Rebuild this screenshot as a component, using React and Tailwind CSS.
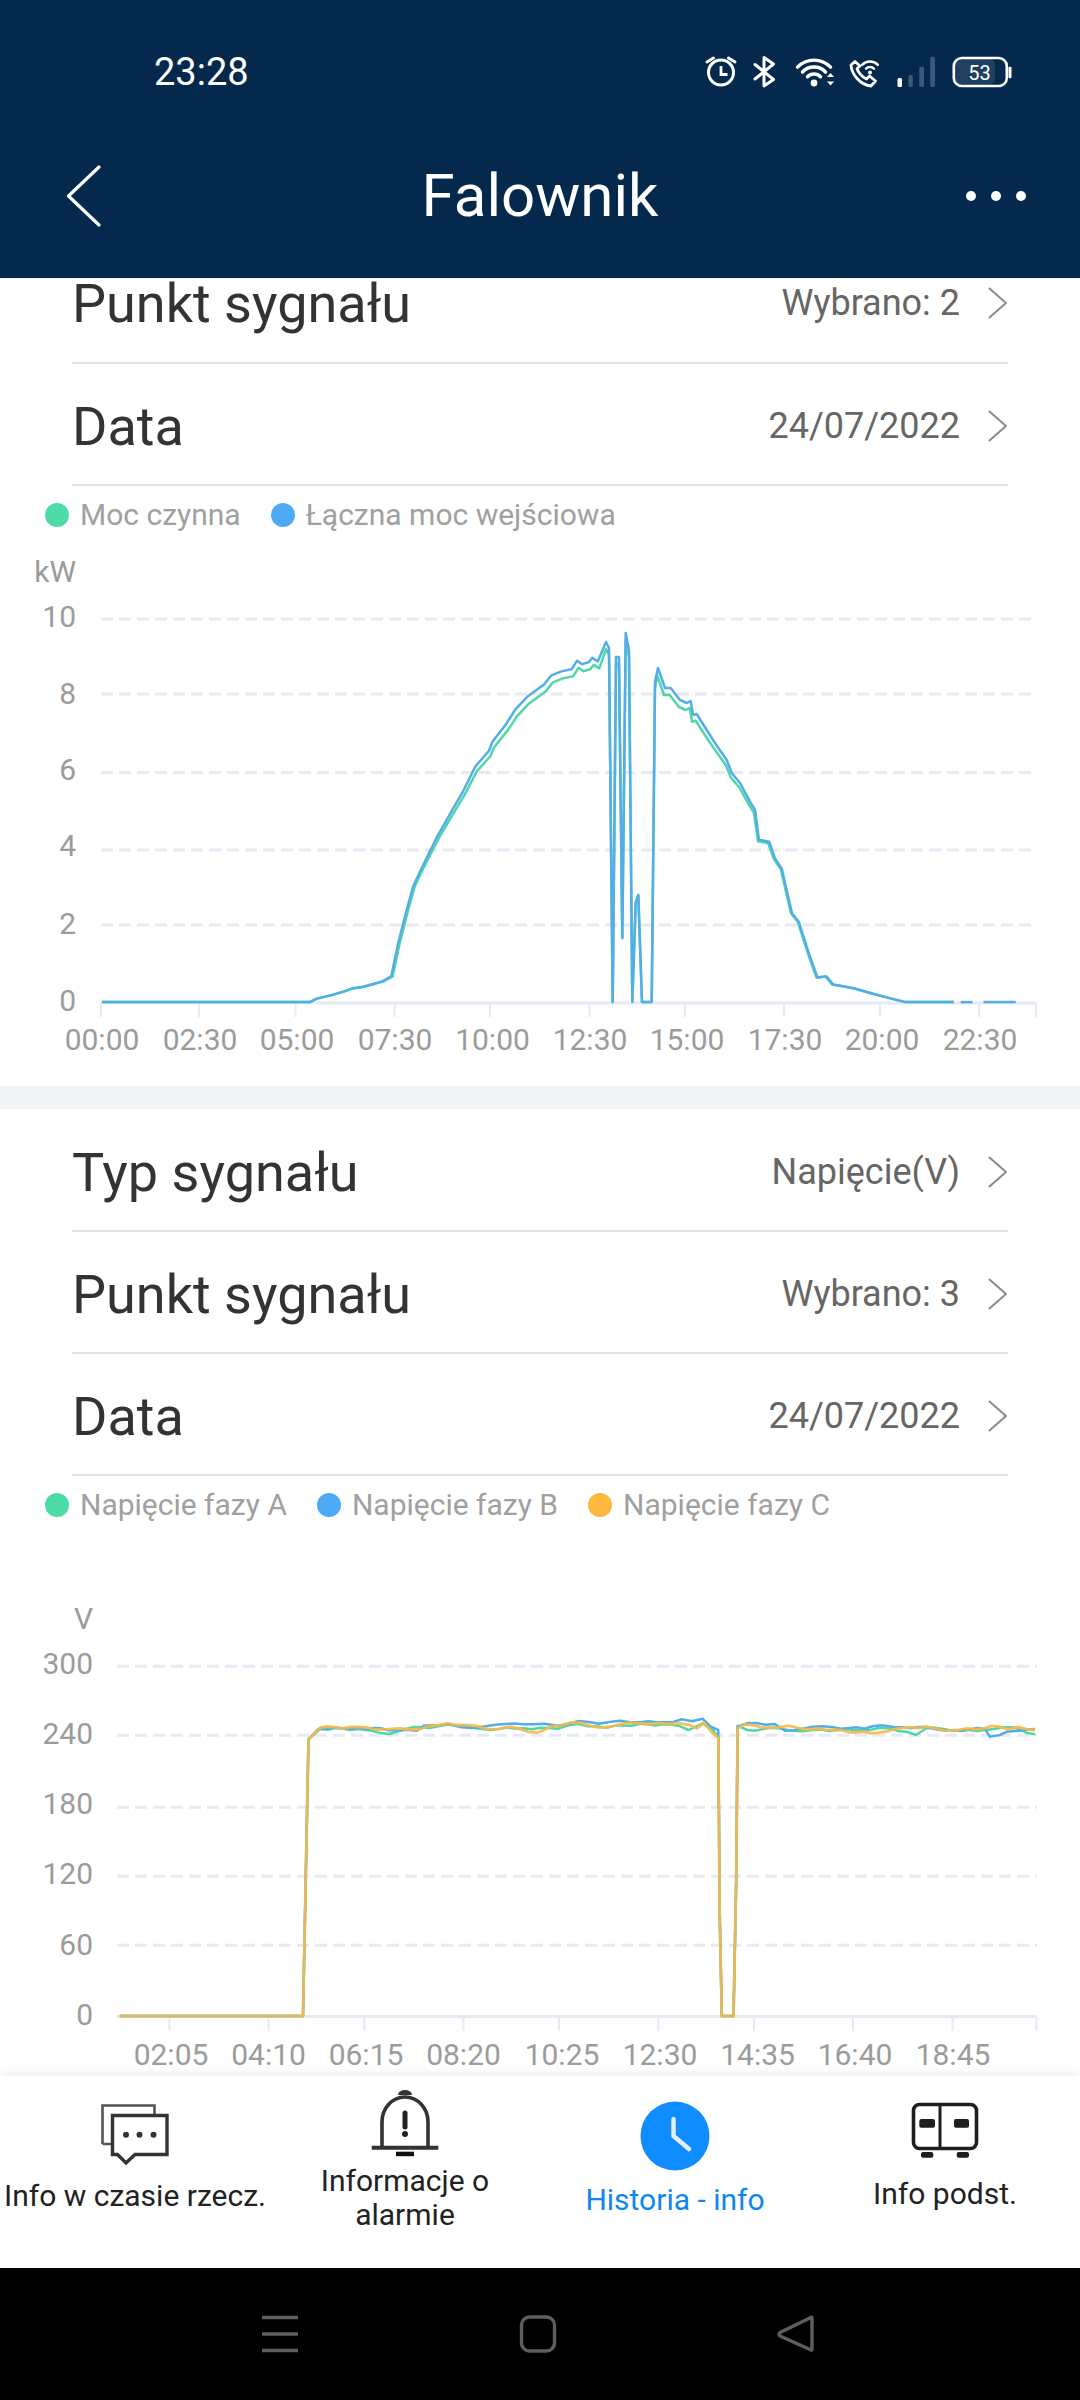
import React from "react";

const poly = (pts) => pts.map((p, i) => `${i ? "L" : "M"}${p[0].toFixed(1)} ${p[1].toFixed(1)}`).join(" ");
const z3 = (a) => a.map(([x, y]) => [x / 1.452, 540 + y / 2.8]);
const z5 = (a) => a.map(([x, y]) => [x / 1.452, 1580 + y / 3]);

const rise = z3([[148,1294],[450,1294],[460,1284],[480,1275],[500,1264],[510,1256],[525,1252],[540,1244],[555,1236],[568,1222],[578,1130],[590,1040],[600,970],[612,920],[635,830],[660,745],[672,705],[690,635],[710,590],[715,565],[735,515],[748,475],[765,440],[790,405],[800,380],[815,368],[830,362],[838,338],[845,348],[855,342],[860,330],[868,340]]);
const spikes = [[606,642],[609,648],[612.7,1002],[616,657],[619,657],[622.3,938],[625.7,633],[629,650],[632.3,1002],[635.7,903],[638.3,895],[642,1002],[651.7,1002],[655,681.7],[658,668],[665,688],[670.7,688],[680,700],[686.7,703],[690.7,701],[693,715],[696.7,714],[706.7,730],[715,743],[726.7,760],[731.7,773],[740,783],[750,801.7],[755,810],[759,840]];
const fall = z3([[1105,840],[1117,845],[1125,890],[1135,920],[1150,1045],[1160,1070],[1175,1160],[1187,1225],[1200,1222],[1210,1245],[1240,1255],[1270,1272],[1290,1282],[1315,1294],[1385,1294]]);
const blue1 = [...rise, ...spikes, ...fall];
const green1 = blue1.map(([x, y]) => {
  const k = y > 990 ? 0 : 7 * Math.min(1, Math.max(0, (880 - y) / 170));
  const dx = y > 990 || y < 620 ? 0 : x > 655 ? -1 : x < 600 ? 1.5 : 0;
  return [x + dx, y + k];
});
const tail1 = [z3([[1395,1294],[1412,1294]]), z3([[1428,1294],[1475,1294]])];

const jitter = (pts, seed) => {
  const out = [];
  pts.forEach((p, i) => {
    out.push(p);
    const q = pts[i + 1];
    if (!q) return;
    const n = Math.floor((q[0] - p[0]) / 7);
    for (let j = 1; j < n; j++) {
      const t = j / n;
      const a = Math.sin((p[0] + j) * 1.7 + seed) * 1.1;
      out.push([p[0] + (q[0] - p[0]) * t, p[1] + (q[1] - p[1]) * t + a]);
    }
  });
  return out;
};

const build = (first, second, seed) => [
  ...z5([[174,1308],[440,1308]]),
  ...jitter(z5(first), seed),
  ...z5([[1045,1000],[1048,1308],[1065,1308],[1069,900]]),
  ...jitter(z5(second), seed + 2),
];

const blue2 = build(
  [[448,478],[462,447],[520,443],[575,450],[605,452],[615,437],[650,432],[670,442],[700,440],[720,434],[760,433],[790,431],[810,437],[840,423],[870,431],[900,422],[930,427],[965,427],[990,418],[1005,424],[1020,416],[1032,440],[1043,450]],
  [[1071,440],[1085,430],[1125,432],[1140,452],[1180,440],[1210,442],[1255,446],[1280,436],[1300,442],[1345,441],[1375,452],[1430,446],[1437,470],[1452,465],[1462,455],[1480,452],[1503,447]],
  1
);
const green2 = build(
  [[448,478],[465,447],[520,447],[540,452],[565,462],[590,446],[660,435],[700,447],[760,445],[810,446],[840,432],[880,443],[930,431],[985,437],[1000,450],[1020,430],[1035,450],[1043,470]],
  [[1071,437],[1085,450],[1130,445],[1150,452],[1180,450],[1240,450],[1290,445],[1330,465],[1345,445],[1395,450],[1430,450],[1470,442],[1503,463]],
  3
);
const orange2 = build(
  [[448,478],[465,443],[520,441],[560,448],[580,445],[610,447],[650,430],[690,437],[710,448],[740,440],[780,458],[800,440],[830,427],[870,443],[900,433],[930,430],[970,432],[1000,434],[1012,445],[1022,428],[1033,455],[1043,473]],
  [[1071,445],[1082,433],[1120,443],[1145,437],[1165,447],[1210,450],[1265,460],[1300,447],[1345,440],[1380,452],[1430,445],[1440,438],[1462,448],[1480,441],[1503,450]],
  5
);

const GRID = "#e6eaf5";
const LABEL = "#9b9b9b";

function Chart({ top, height, left, right, grids, axisY, ticks, tickEnd, yLabels, yRight, unit, xLabels, xY, children }) {
  return (
    <svg viewBox={`0 ${top} 1080 ${height}`} className="block w-[1080px] shrink-0" style={{ height }}>
      {grids.map((y) => (
        <line key={y} x1={left} x2={right} y1={y} y2={y} stroke={GRID} strokeWidth="3" strokeDasharray="12 6" />
      ))}
      <line x1={left} x2={1036} y1={axisY} y2={axisY} stroke={GRID} strokeWidth="3" />
      {ticks.map((x) => (
        <line key={x} x1={x} x2={x} y1={axisY} y2={tickEnd} stroke={GRID} strokeWidth="2" />
      ))}
      {yLabels.map(([t, y]) => (
        <text key={t} x={yRight} y={y} textAnchor="end" dominantBaseline="central" fontSize="30" fill={LABEL}>{t}</text>
      ))}
      <text x={yRight} y={unit[1]} textAnchor="end" dominantBaseline="central" fontSize="30" fill={LABEL}>{unit[0]}</text>
      {xLabels.map(([t, x]) => (
        <text key={t} x={x} y={xY} textAnchor="middle" dominantBaseline="central" fontSize="30" fill={LABEL}>{t}</text>
      ))}
      {children}
    </svg>
  );
}

const Chevron = () => (
  <svg width="20" height="32" viewBox="0 0 20 32" fill="none" className="ml-[28px] shrink-0">
    <path d="M1.5 1.5 L18 16 L1.5 30.5" stroke="#8a8a8a" strokeWidth="2" strokeLinecap="round" strokeLinejoin="round" />
  </svg>
);

function Row({ label, value, className }) {
  return (
    <div className={`mx-[72px] flex items-center justify-between border-b-2 border-[#e2e2e2] ${className}`}>
      <span className="text-[54px] leading-none text-[#333333]">{label}</span>
      <span className="mb-[2px] flex items-center text-[36px] leading-none text-[#666666]">
        {value}
        <Chevron />
      </span>
    </div>
  );
}

function Legend({ items, className }) {
  return (
    <div className={`flex items-center pl-[45px] gap-[30px] ${className}`}>
      {items.map(([t, c]) => (
        <div key={t} className="flex items-center gap-[11px]">
          <span className={`h-[24px] w-[24px] rounded-full ${c}`} />
          <span className="text-[30px] leading-none text-[#a0a0a0]">{t}</span>
        </div>
      ))}
    </div>
  );
}

function NavItem({ icon, lines, pt, gap, color }) {
  return (
    <div className="flex flex-1 flex-col items-center" style={{ paddingTop: pt }}>
      {icon}
      <div className={`whitespace-nowrap text-center text-[30px] leading-[34px] ${color}`} style={{ marginTop: gap }}>
        {lines.map((l) => <div key={l}>{l}</div>)}
      </div>
    </div>
  );
}

const wifiArc = (cx, cy, r) => `M${cx - r * 0.72} ${cy - r * 0.69} A${r} ${r} 0 0 1 ${cx + r * 0.72} ${cy - r * 0.69}`;

function StatusIcons() {
  return (
    <svg viewBox="700 50 320 45" width="320" height="45" fill="none" className="block">
      <circle cx="721" cy="72.5" r="12.5" stroke="#fff" strokeWidth="3" />
      <path d="M721 66 V74.5 H727.5" stroke="#fff" strokeWidth="2.8" />
      <path d="M707 62 L713.5 58 M735 62 L728.5 58" stroke="#fff" strokeWidth="3" strokeLinecap="round" />
      <path d="M755 64.5 L773.5 79.5 L764 86 V57.5 L773.5 64 L755 79" stroke="#fff" strokeWidth="3" strokeLinejoin="round" strokeLinecap="round" />
      <circle cx="814" cy="83" r="3.4" fill="#fff" />
      {[9, 16, 23].map((r) => (
        <path key={r} d={wifiArc(814, 83, r)} stroke="#fff" strokeWidth="3.4" strokeLinecap="round" />
      ))}
      <path d="M827 77 L830.5 73 L834 77 Z M827 81.5 L830.5 85.5 L834 81.5 Z" fill="#fff" />
      <path d="M855 61.5 L851 65 C851.5 74 860 85 871 86 L875.5 81 L869.5 76 L866.5 79 C862 77 858 72 857 68.5 L860 66 Z" stroke="#fff" strokeWidth="2.8" strokeLinejoin="round" />
      <circle cx="870" cy="72.5" r="2" fill="#fff" />
      {[5.5, 11].map((r) => (
        <path key={r} d={wifiArc(870, 72.5, r)} stroke="#fff" strokeWidth="2.4" strokeLinecap="round" />
      ))}
      <rect x="897.5" y="78" width="4.5" height="9" rx="1.5" fill="#fff" />
      <rect x="908.3" y="75" width="4.5" height="12" rx="1.5" fill="#3b5a79" />
      <rect x="919.3" y="66.7" width="4.7" height="20.3" rx="1.5" fill="#3b5a79" />
      <rect x="930.2" y="56.7" width="4.8" height="30.3" rx="1.5" fill="#3b5a79" />
      <rect x="955" y="59" width="40" height="25.5" rx="6" fill="#20405f" />
      <rect x="953.8" y="58" width="53" height="28" rx="8" stroke="#fff" strokeWidth="2.6" />
      <rect x="1008.5" y="66.7" width="3" height="11.6" rx="1" fill="#fff" />
      <text x="979.5" y="72.5" textAnchor="middle" dominantBaseline="central" fontSize="20" fill="#fff">53</text>
    </svg>
  );
}

export default function App() {
  return (
    <div className="flex h-[2400px] w-[1080px] flex-col overflow-hidden bg-white font-[Roboto,sans-serif]">
      <header className="flex h-[278px] shrink-0 flex-col bg-[#04294c] text-white">
        <div className="flex h-[144px] items-center justify-between">
          <span className="pl-[154px] text-[38px] leading-none">23:28</span>
          <span className="mr-[60px]"><StatusIcons /></span>
        </div>
        <div className="grid h-[104px] grid-cols-[1fr_auto_1fr] items-center">
          <svg width="36" height="62" viewBox="0 0 36 62" fill="none" className="ml-[66px]">
            <path d="M33 2 L2.5 31 L33 60" stroke="#fff" strokeWidth="3.2" strokeLinecap="round" strokeLinejoin="round" />
          </svg>
          <span className="text-[60px] leading-none">Falownik</span>
          <div className="flex justify-end gap-[15px] pr-[54px]">
            <span className="h-[10px] w-[10px] rounded-full bg-white" />
            <span className="h-[10px] w-[10px] rounded-full bg-white" />
            <span className="h-[10px] w-[10px] rounded-full bg-white" />
          </div>
        </div>
      </header>

      <main className="flex min-h-0 flex-1 flex-col overflow-hidden">
        <Row label="Punkt sygnału" value="Wybrano: 2" className="-mt-[36px] h-[122px] shrink-0 pt-[3px]" />
        <Row label="Data" value="24/07/2022" className="h-[122px] shrink-0 pt-[5px]" />
        <Legend className="h-[59px] shrink-0 pb-[2px]" items={[["Moc czynna", "bg-[#4ddba8]"], ["Łączna moc wejściowa", "bg-[#4dabf5]"]]} />
        <Chart
          top={545}
          height={541}
          left={101}
          right={1032}
          grids={[619, 694, 772.5, 850, 925]}
          axisY={1003}
          ticks={[101, 199, 295.5, 394.6, 490, 589.5, 685, 784, 880, 979, 1036]}
          tickEnd={1017}
          yLabels={[["10", 616], ["8", 693], ["6", 769.5], ["4", 845.5], ["2", 923], ["0", 1000]]}
          yRight={76}
          unit={["kW", 571]}
          xLabels={["00:00","02:30","05:00","07:30","10:00","12:30","15:00","17:30","20:00","22:30"].map((t, i) => [t, [102,200,297,395,492.5,590,687,785,882,980][i]])}
          xY={1039}
        >
          <path d={poly(green1)} fill="none" stroke="#4ed8a8" strokeWidth="2.5" strokeLinejoin="round" />
          <path d={poly(blue1)} fill="none" stroke="#55ade8" strokeWidth="2.5" strokeLinejoin="round" />
          {tail1.map((t, i) => <path key={i} d={poly(t)} fill="none" stroke="#55ade8" strokeWidth="2.5" />)}
        </Chart>
        <div className="h-[23px] shrink-0 bg-[#f2f5f8]" />
        <Row label="Typ sygnału" value="Napięcie(V)" className="h-[123px] shrink-0 pt-[6px]" />
        <Row label="Punkt sygnału" value="Wybrano: 3" className="h-[122px] shrink-0 pt-[5px]" />
        <Row label="Data" value="24/07/2022" className="h-[122px] shrink-0 pt-[5px]" />
        <Legend className="h-[57px] shrink-0 pt-[1px]" items={[["Napięcie fazy A", "bg-[#4ddba8]"], ["Napięcie fazy B", "bg-[#4dabf5]"], ["Napięcie fazy C", "bg-[#ffb83d]"]]} />
        <Chart
          top={1533}
          height={543}
          left={117}
          right={1037}
          grids={[1666.3, 1735.3, 1807.3, 1876.3, 1945.3]}
          axisY={2016.5}
          ticks={[169.4, 268.6, 364.3, 463.5, 559, 658.4, 754, 853, 952.5, 1036.5]}
          tickEnd={2031}
          yLabels={[["300", 1663], ["240", 1733], ["180", 1803], ["120", 1873], ["60", 1944], ["0", 2014]]}
          yRight={93}
          unit={["V", 1618]}
          xLabels={["02:05","04:10","06:15","08:20","10:25","12:30","14:35","16:40","18:45"].map((t, i) => [t, [171,268.6,366,463.5,562,660,757.6,855,953][i]])}
          xY={2054}
        >
          <path d={poly(green2)} fill="none" stroke="#4ed8a8" strokeWidth="2.5" strokeLinejoin="round" />
          <path d={poly(blue2)} fill="none" stroke="#55ade8" strokeWidth="2.5" strokeLinejoin="round" />
          <path d={poly(orange2)} fill="none" stroke="#f6b94a" strokeOpacity="0.9" strokeWidth="2.8" strokeLinejoin="round" />
        </Chart>
      </main>

      <nav className="relative z-10 flex h-[192px] shrink-0 bg-white shadow-[0_-3px_10px_rgba(0,0,0,0.07)]">
        <NavItem
          pt={26}
          gap={13}
          color="text-[#222222]"
          lines={["Info w czasie rzecz."]}
          icon={
            <svg width="70" height="64" viewBox="0 0 70 64" fill="none">
              <path d="M2.5 42 V3.5 H54.5 V12 M2.5 42 H11" stroke="#555" strokeWidth="2.6" />
              <path d="M12.5 13.5 H67 V52.5 H35 L26 61 L17.5 52.5 H12.5 Z" stroke="#333" strokeWidth="3.4" />
              <circle cx="26" cy="32.7" r="3" fill="#333" />
              <circle cx="39.5" cy="32.7" r="3" fill="#333" />
              <circle cx="53.5" cy="32.7" r="3" fill="#333" />
            </svg>
          }
        />
        <NavItem
          pt={12}
          gap={4}
          color="text-[#222222]"
          lines={["Informacje o", "alarmie"]}
          icon={
            <svg width="70" height="72" viewBox="0 0 70 72" fill="none">
              <path d="M28 7 A7 5 0 0 1 42 7 Z" fill="#333" />
              <path d="M12 58 V34 A23 25 0 0 1 58 34 V58" stroke="#333" strokeWidth="3.6" />
              <path d="M1.7 59.7 H68.3" stroke="#333" strokeWidth="4" />
              <rect x="26" y="63.7" width="18" height="4.5" fill="#111" />
              <path d="M35 25 V39" stroke="#222" strokeWidth="5" strokeLinecap="round" />
              <circle cx="35" cy="46" r="3" fill="#222" />
            </svg>
          }
        />
        <NavItem
          pt={25}
          gap={12}
          color="text-[#0f86f0]"
          lines={["Historia - info"]}
          icon={
            <svg width="70" height="70" viewBox="0 0 70 70" fill="none">
              <circle cx="35" cy="35" r="34.5" fill="#0f8cff" />
              <path d="M33.5 18 V35 L49 48" stroke="#e3f1ff" strokeWidth="4.5" strokeLinecap="round" strokeLinejoin="round" />
            </svg>
          }
        />
        <NavItem
          pt={25}
          gap={16}
          color="text-[#222222]"
          lines={["Info podst."]}
          icon={
            <svg width="70" height="60" viewBox="0 0 70 60" fill="none">
              <rect x="3.5" y="3.5" width="63" height="44" rx="6" stroke="#1e1e1e" strokeWidth="3.6" />
              <path d="M30 3 V48" stroke="#1e1e1e" strokeWidth="3" />
              <rect x="9.3" y="18" width="15.7" height="8.7" rx="2" fill="#1e1e1e" />
              <rect x="44" y="18" width="15" height="8.7" rx="2" fill="#1e1e1e" />
              <rect x="11" y="51" width="12.3" height="5.7" rx="2" fill="#1e1e1e" />
              <rect x="46.7" y="51" width="12.3" height="5.7" rx="2" fill="#1e1e1e" />
            </svg>
          }
        />
      </nav>

      <footer className="flex h-[132px] shrink-0 items-center justify-center bg-black">
        <svg width="560" height="40" viewBox="262 2314 560 40" fill="none" stroke="#5f5f5f" strokeWidth="3.4">
          <path d="M264 2317.5 H300 M264 2334 H300 M264 2350.5 H300" />
          <rect x="523.5" y="2317" width="33" height="34" rx="8" />
          <path d="M814 2318 V2349.5 Q814 2351 812 2349.5 L782 2336 Q780 2334.5 782 2332.5 L812 2318 Q814 2316.5 814 2318 Z" strokeLinejoin="round" />
        </svg>
      </footer>
    </div>
  );
}
